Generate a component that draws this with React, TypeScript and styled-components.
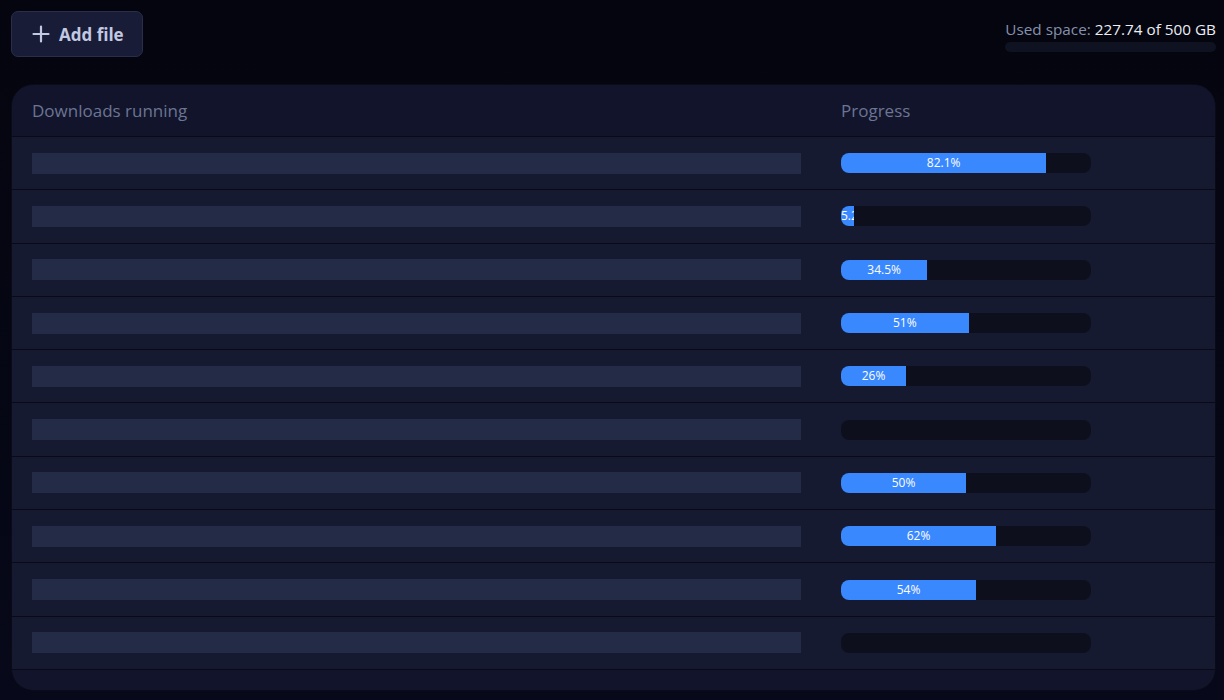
import styled, { createGlobalStyle } from 'styled-components';

const GlobalStyle = createGlobalStyle`
  html, body {
    margin: 0;
    background: #060716;
  }
  body {
    font-family: 'Open Sans', 'Noto Sans', sans-serif;
  }
`;

const Page = styled.div`
  padding: 11px 8px 10px 11px;
  min-height: 700px;
  box-sizing: border-box;
  background: linear-gradient(180deg, #04050e 0%, #070819 100%);
`;

const TopBar = styled.div`
  display: flex;
  justify-content: space-between;
  align-items: flex-start;
  height: 46px;
  margin-bottom: 27px;
`;

const AddButton = styled.button`
  display: flex;
  align-items: center;
  gap: 9px;
  height: 46px;
  width: 132px;
  padding: 0 0 0 20px;
  box-sizing: border-box;
  background: #191c37;
  border: 1px solid #2a2e4b;
  border-radius: 7px;
  color: #c3c8e2;
  font-family: 'Open Sans', sans-serif;
  font-weight: 700;
  font-size: 17px;
  cursor: pointer;
`;

const Usage = styled.div`
  display: flex;
  flex-direction: column;
  align-items: stretch;
  gap: 2px;
  padding-top: 8px;
  width: 211px;
`;

const UsageText = styled.div`
  font-size: 15.3px;
  color: #8791ad;
  white-space: nowrap;
  text-align: right;
  line-height: 21px;
`;

const UsageValue = styled.span`
  color: #eceef6;
`;

const UsageTrack = styled.div`
  height: 10px;
  border-radius: 5px;
  background: #0f1220;
`;

const Card = styled.div`
  background: #11142a;
  border: 1px solid #0a0b16;
  border-radius: 22px;
  overflow: hidden;
  padding-bottom: 20px;
`;

const Table = styled.div`
  display: flex;
  flex-direction: column;
`;

const Row = styled.div<{ $head?: boolean }>`
  display: grid;
  grid-template-columns: 769px 250px;
  column-gap: 40px;
  align-items: center;
  padding: 0 20px;
  height: ${(p) => (p.$head ? '51px' : '52.3px')};
  background: ${(p) => (p.$head ? '#11142a' : '#161a31')};
  border-bottom: 1px solid #090a15;
`;

const HeadCell = styled.div`
  font-size: 17px;
  color: #6c7594;
  line-height: 20px;
`;

const NamePlaceholder = styled.div`
  height: 21px;
  background: #242b47;
`;

const Track = styled.div`
  height: 20px;
  border-radius: 8px;
  background: #0d101c;
  overflow: hidden;
  display: flex;
`;

const Fill = styled.div`
  height: 100%;
  background: #3a88fe;
  color: #ffffff;
  font-size: 12px;
  line-height: 20px;
  text-align: center;
  white-space: nowrap;
  overflow: hidden;
`;

const PlusIcon = () => (
  <svg width="18" height="18" viewBox="0 0 18 18" fill="none">
    <path d="M9 1.5v15M1.5 9h15" stroke="#c3c8e2" strokeWidth="2.2" strokeLinecap="round" />
  </svg>
);

const downloads: (number | null)[] = [82.1, 5.2, 34.5, 51, 26, null, 50, 62, 54, null];

export default function App() {
  return (
    <>
      <GlobalStyle />
      <Page>
        <TopBar>
          <AddButton>
            <PlusIcon />
            Add file
          </AddButton>
          <Usage>
            <UsageText>
              Used space: <UsageValue>227.74 of 500 GB</UsageValue>
            </UsageText>
            <UsageTrack />
          </Usage>
        </TopBar>
        <Card>
          <Table>
            <Row $head>
              <HeadCell>Downloads running</HeadCell>
              <HeadCell>Progress</HeadCell>
            </Row>
            {downloads.map((value, i) => (
              <Row key={i}>
                <NamePlaceholder />
                <Track>
                  {value !== null && (
                    <Fill style={{ width: `${value}%` }}>{`${value}%`}</Fill>
                  )}
                </Track>
              </Row>
            ))}
          </Table>
        </Card>
      </Page>
    </>
  );
}
